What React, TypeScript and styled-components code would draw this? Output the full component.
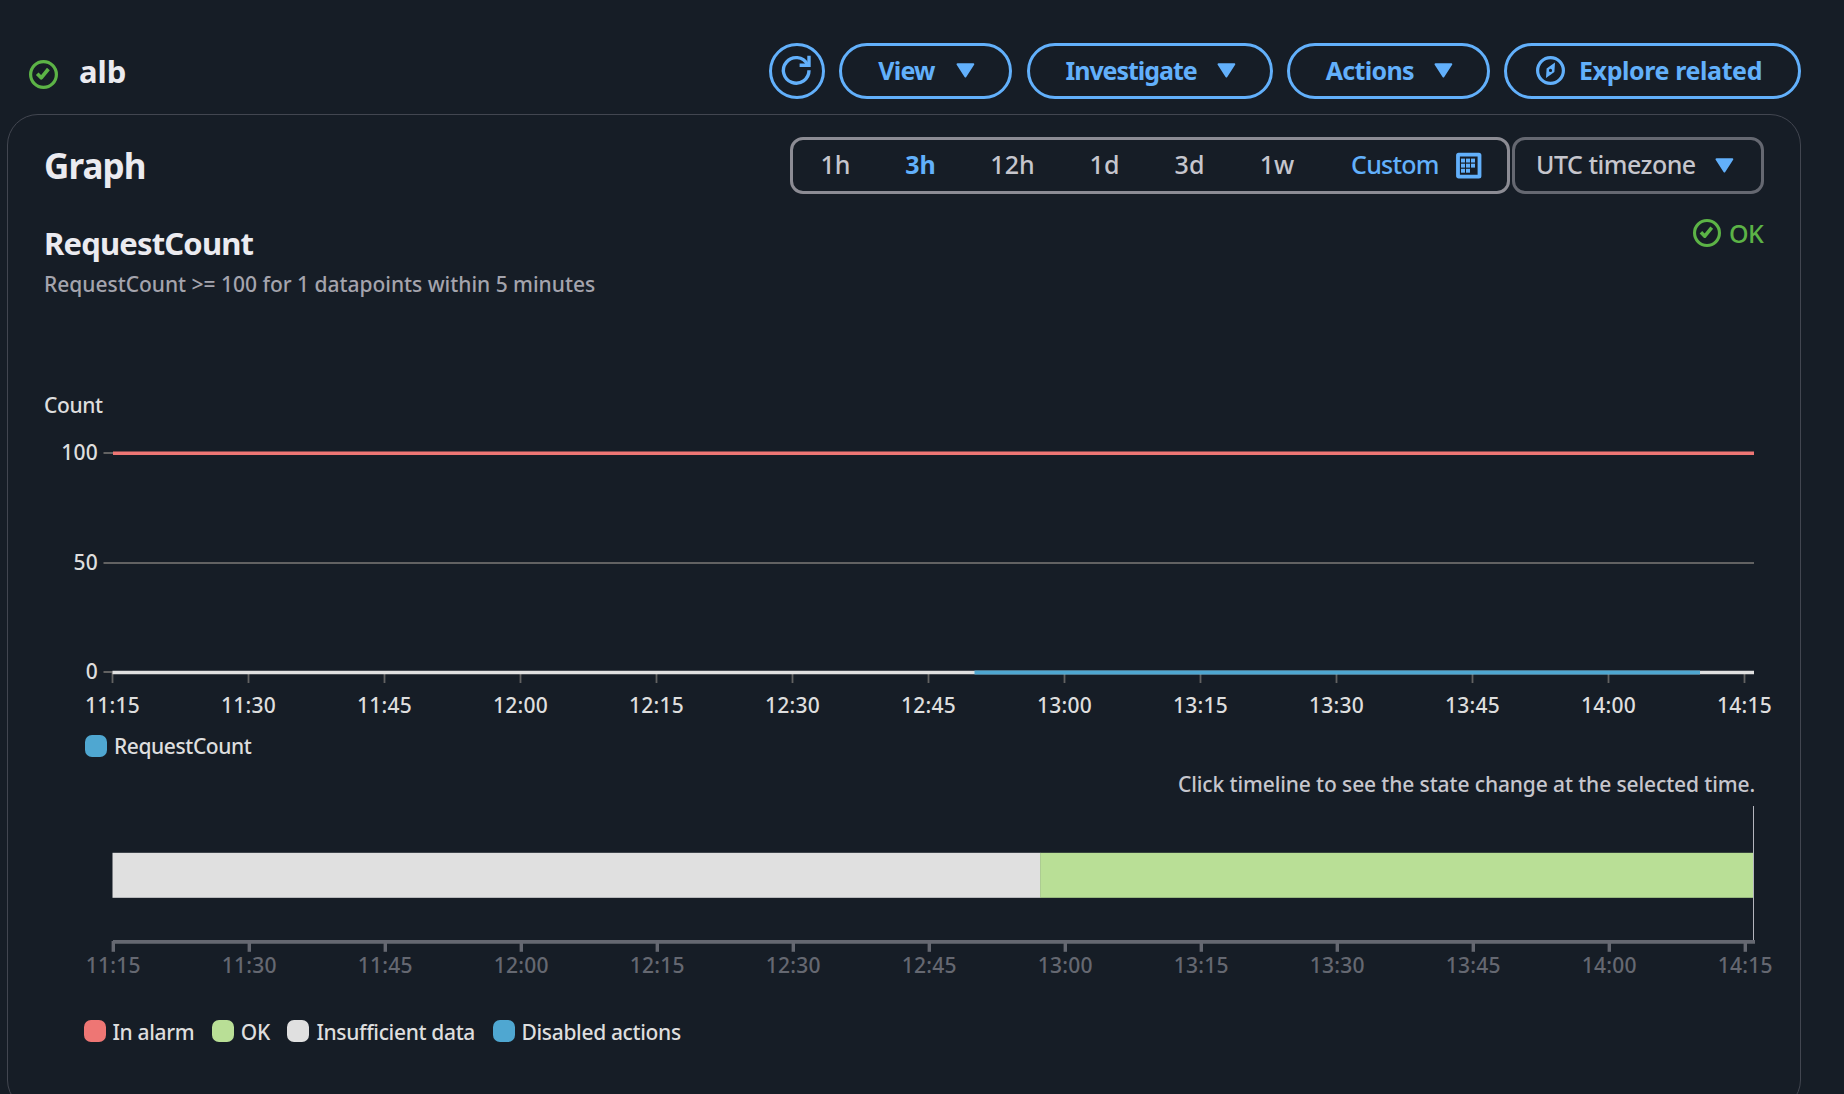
import React from "react";
import styled, { createGlobalStyle } from "styled-components";

const color = {
  page: "#161d26",
  border: "#424650",
  link: "#62b0fb",
  success: "#5cb346",
  heading: "#ebebf0",
  body: "#c6c6cd",
  muted: "#a4a4ad",
  dim: "#656871",
  control: "#8c8c94",
  chartText: "#dedede",
  grid: "#626262",
  alarm: "#ee7674",
  ok: "#b9df96",
  insufficient: "#e0e0e0",
  disabled: "#4fa7d1",
};

const font = `"Noto Sans", "Open Sans", sans-serif`;

const GlobalStyle = createGlobalStyle`
  *, *::before, *::after { box-sizing: border-box; }
  body {
    margin: 0;
    background: ${color.page};
    font-family: ${font};
    overflow: hidden;
  }
  button { font-family: inherit; background: none; cursor: pointer; margin: 0; }
  h1, h2, h3, p { margin: 0; }
  svg { display: block; flex: none; overflow: visible; }
`;

const Page = styled.main`
  height: 1094px;
  overflow: hidden;
`;

const PageHeader = styled.header`
  display: flex;
  justify-content: space-between;
  align-items: flex-start;
  height: 114px;
  padding: 43px 43px 0 29px;
`;

const TitleGroup = styled.div`
  display: flex;
  align-items: flex-start;
  gap: 21px;
  & > svg { margin-top: 17px; }
`;

const Title = styled.h1`
  margin-top: 8px;
  font-size: 31px;
  line-height: 40px;
  font-weight: 700;
  color: ${color.heading};
`;

const ButtonRow = styled.div`
  display: flex;
  gap: 14.25px;
`;

const PillButton = styled.button<{ $width: number; $spacing?: number }>`
  display: flex;
  align-items: center;
  justify-content: space-between;
  width: ${(p) => p.$width}px;
  height: 56px;
  padding: 0 34px 0 36px;
  border: 3px solid ${color.link};
  border-radius: 28px;
  color: ${color.link};
  font-size: 25px;
  line-height: 32px;
  font-weight: 700;
  letter-spacing: ${(p) => p.$spacing ?? 0}px;
  white-space: nowrap;
  & > svg { margin-bottom: 2px; }
`;

const RoundButton = styled(PillButton)`
  justify-content: center;
  padding: 0;
  & > svg { margin: 0; }
`;

const IconButton = styled(PillButton)`
  justify-content: flex-start;
  gap: 14px;
  padding: 0 0 0 29px;
  & > svg { margin-bottom: 1px; }
`;

const ButtonLabel = styled.span`
  padding-bottom: 2px;
`;

const Panel = styled.section`
  display: flex;
  flex-direction: column;
  width: 1794px;
  height: 997px;
  margin-left: 7px;
  padding: 22px 36px 0;
  border: 1px solid ${color.border};
  border-radius: 31px;
`;

const PanelHeader = styled.div`
  display: flex;
  justify-content: space-between;
  align-items: flex-start;
  height: 57px;
`;

const PanelTitle = styled.h2`
  margin-top: 7px;
  font-size: 35px;
  line-height: 44px;
  font-weight: 700;
  letter-spacing: -0.9px;
  color: ${color.heading};
`;

const Controls = styled.div`
  display: flex;
  gap: 2px;
`;

const ControlBox = styled.div<{ $width: number; $border: string }>`
  display: flex;
  align-items: center;
  width: ${(p) => p.$width}px;
  height: 57px;
  border: 3px solid ${(p) => p.$border};
  border-radius: 13px;
  font-size: 25px;
  line-height: 32px;
  font-weight: 500;
  color: ${color.body};
`;

const RangeOption = styled.button<{ $width: number; $active?: boolean }>`
  width: ${(p) => p.$width}px;
  padding: 0 0 3px;
  border: 0;
  text-align: center;
  font-size: 25px;
  line-height: 32px;
  font-weight: ${(p) => (p.$active ? 700 : 500)};
  color: ${(p) => (p.$active ? color.link : color.body)};
`;

const CustomRange = styled.button`
  display: flex;
  flex: 1;
  align-items: center;
  justify-content: space-between;
  padding: 0 25px 0 29px;
  border: 0;
  font-size: 25px;
  line-height: 32px;
  font-weight: 500;
  letter-spacing: -0.75px;
  color: ${color.link};
`;

const ControlLabel = styled.span`
  padding-bottom: 3px;
`;

const TimezoneSelect = styled(ControlBox)`
  justify-content: space-between;
  padding: 0 27px 0 21px;
  letter-spacing: -0.5px;
`;

const AlarmHeader = styled.div`
  display: flex;
  justify-content: space-between;
  align-items: flex-start;
  margin-top: 23px;
  height: 81px;
`;

const AlarmTitle = styled.h3`
  margin-top: 6px;
  font-size: 31px;
  line-height: 40px;
  font-weight: 700;
  letter-spacing: -0.83px;
  color: ${color.heading};
`;

const AlarmRule = styled.p`
  margin-top: 7px;
  font-size: 21px;
  line-height: 28px;
  font-weight: 500;
  letter-spacing: -0.02px;
  color: ${color.muted};
`;

const Status = styled.div`
  display: flex;
  align-items: flex-start;
  gap: 8px;
  padding-right: 1px;
  font-size: 25px;
  line-height: 32px;
  font-weight: 500;
  letter-spacing: -0.7px;
  color: ${color.success};
  & > svg { margin-top: 2px; }
`;

const AxisTitle = styled.p`
  margin-top: 93px;
  font-size: 21px;
  line-height: 28px;
  font-weight: 500;
  letter-spacing: -0.35px;
  color: ${color.chartText};
`;

const Plot = styled.svg`
  text {
    font-family: ${font};
    font-size: 21px;
    font-weight: 500;
    letter-spacing: 0.24px;
  }
`;

const TimelineHint = styled.p`
  margin-top: 10px;
  padding-right: 9px;
  text-align: right;
  font-size: 21px;
  line-height: 28px;
  font-weight: 500;
  letter-spacing: -0.12px;
  color: ${color.body};
`;

const Legend = styled.ul<{ $top: number; $left: number }>`
  display: flex;
  gap: 17.5px;
  margin: ${(p) => p.$top}px 0 0;
  padding: 0 0 0 ${(p) => p.$left}px;
  list-style: none;
`;

const LegendItem = styled.li<{ $spacing: number }>`
  display: flex;
  align-items: center;
  gap: 7px;
  font-size: 21px;
  line-height: 28px;
  font-weight: 500;
  letter-spacing: ${(p) => p.$spacing}px;
  color: ${color.chartText};
`;

const LegendLabel = styled.span<{ $drop?: number }>`
  padding-top: ${(p) => p.$drop ?? 0}px;
`;

const Swatch = styled.span<{ $color: string }>`
  width: 22px;
  height: 22px;
  border-radius: 7px;
  background: ${(p) => p.$color};
`;

const CheckCircle = ({ size = 29 }: { size?: number }) => (
  <svg width={size} height={size} viewBox="0 0 29 29" fill="none" stroke={color.success}>
    <circle cx="14.5" cy="14.5" r="12.9" strokeWidth="3.2" />
    <path d="M8.2 13.8L12.2 17.8L19.4 9" strokeWidth="3.7" strokeLinejoin="round" />
  </svg>
);

const Caret = () => (
  <svg width="19" height="15" viewBox="0 0 19 15">
    <path d="M1.5 1.3H17.3L9.4 13.4Z" fill={color.link} stroke={color.link} strokeWidth="2" strokeLinejoin="round" />
  </svg>
);

const RefreshIcon = () => (
  <svg width="30" height="30" viewBox="0 0 30 30" fill="none" stroke={color.link} strokeWidth="3.4">
    <path d="M27 14.3A12.8 12.8 0 1 1 25.4 8.2" />
    <path d="M27 -0.3V9.2H17.6" />
  </svg>
);

const CompassIcon = () => (
  <svg width="29" height="29" viewBox="0 0 29 29">
    <circle cx="14.5" cy="14.5" r="12.9" fill="none" stroke={color.link} strokeWidth="3.2" />
    <path
      d="M19 6.6L18.4 16L10 22L10.6 12.6ZM14.5 12.8A1.6 1.6 0 1 0 14.5 16A1.6 1.6 0 1 0 14.5 12.8Z"
      fill={color.link}
      fillRule="evenodd"
    />
  </svg>
);

const calendarCells = [
  [5, 5.6], [10, 5.6], [15, 5.6],
  [5, 10.7], [10, 10.7], [15, 10.7],
  [5, 15.8], [10, 15.8],
];

const CalendarIcon = () => (
  <svg width="26" height="26" viewBox="0 0 26 26">
    <rect x="2" y="1.7" width="21.5" height="22" rx="0.6" fill="none" stroke={color.link} strokeWidth="3.8" />
    {calendarCells.map(([x, y]) => (
      <rect key={`${x}-${y}`} x={x} y={y} width="4" height="3.9" fill={color.link} />
    ))}
  </svg>
);

const times = [
  "11:15", "11:30", "11:45", "12:00", "12:15", "12:30", "12:45",
  "13:00", "13:15", "13:30", "13:45", "14:00", "14:15",
];
const TICK_STEP = 136;
const PLOT_LEFT = 69;
const PLOT_RIGHT = 1710;

const yTicks = [
  { label: "100", y: 34 },
  { label: "50", y: 144 },
  { label: "0", y: 253 },
];

const MetricChart = () => (
  <Plot width="1720" height="301">
    {yTicks.map(({ label, y }) => (
      <g key={label}>
        <text x="54" y={y + 7.3} textAnchor="end" fill={color.chartText}>{label}</text>
        <line x1="59.5" x2={PLOT_RIGHT} y1={y} y2={y} stroke={color.grid} strokeWidth="2" />
      </g>
    ))}
    {times.map((t, i) => {
      const x = 68.5 + i * TICK_STEP;
      return (
        <g key={t}>
          <line x1={x} x2={x} y1="253" y2="264" stroke={color.grid} strokeWidth="1.8" />
          <text x={x} y="293.9" textAnchor="middle" fill={color.chartText}>{t}</text>
        </g>
      );
    })}
    <line x1={PLOT_LEFT} x2={PLOT_RIGHT} y1="34.2" y2="34.2" stroke={color.alarm} strokeWidth="3.4" />
    <line x1={PLOT_LEFT - 0.5} x2={PLOT_RIGHT} y1="253.5" y2="253.5" stroke={color.insufficient} strokeWidth="3.6" />
    <line x1="930.5" x2="1656" y1="253.5" y2="253.5" stroke={color.disabled} strokeWidth="4.2" />
  </Plot>
);

const StateTimeline = () => (
  <Plot width="1720" height="182">
    <rect x="68.5" y="54.8" width="928" height="45" fill={color.insufficient} />
    <rect x="996.2" y="54.8" width="713.8" height="45" fill={color.ok} />
    <line x1="1709.5" x2="1709.5" y1="8" y2="142" stroke="#b4b5bd" />
    <line x1="69" x2="1711" y1="143.9" y2="143.9" stroke={color.dim} strokeWidth="3.6" />
    {times.map((t, i) => {
      const x = 69.3 + i * TICK_STEP;
      return (
        <g key={t}>
          <line x1={x} x2={x} y1="143" y2="153.8" stroke={color.dim} strokeWidth="3.4" />
          <text x={x} y="175.3" textAnchor="middle" fill={color.dim}>{t}</text>
        </g>
      );
    })}
  </Plot>
);

const ranges = [
  { label: "1h", width: 85 },
  { label: "3h", width: 85, active: true },
  { label: "12h", width: 99 },
  { label: "1d", width: 85 },
  { label: "3d", width: 85 },
  { label: "1w", width: 90 },
];

const states = [
  { label: "In alarm", color: color.alarm },
  { label: "OK", color: color.ok },
  { label: "Insufficient data", color: color.insufficient },
  { label: "Disabled actions", color: color.disabled },
];

export default function App() {
  return (
    <>
      <GlobalStyle />
      <Page>
        <PageHeader>
          <TitleGroup>
            <CheckCircle />
            <Title>alb</Title>
          </TitleGroup>
          <ButtonRow>
            <RoundButton $width={56} aria-label="Refresh"><RefreshIcon /></RoundButton>
            <PillButton $width={173} $spacing={-0.8}><ButtonLabel>View</ButtonLabel><Caret /></PillButton>
            <PillButton $width={246} $spacing={-1.05}><ButtonLabel>Investigate</ButtonLabel><Caret /></PillButton>
            <PillButton $width={203} $spacing={-0.7}><ButtonLabel>Actions</ButtonLabel><Caret /></PillButton>
            <IconButton $width={297} $spacing={-0.4}><CompassIcon /><ButtonLabel>Explore related</ButtonLabel></IconButton>
          </ButtonRow>
        </PageHeader>
        <Panel>
          <PanelHeader>
            <PanelTitle>Graph</PanelTitle>
            <Controls>
              <ControlBox $width={720} $border={color.control}>
                {ranges.map((r) => (
                  <RangeOption key={r.label} $width={r.width} $active={r.active}>{r.label}</RangeOption>
                ))}
                <CustomRange><ControlLabel>Custom</ControlLabel><CalendarIcon /></CustomRange>
              </ControlBox>
              <TimezoneSelect $width={252} $border={color.dim}>
                <ControlLabel>UTC timezone</ControlLabel>
                <Caret />
              </TimezoneSelect>
            </Controls>
          </PanelHeader>
          <AlarmHeader>
            <div>
              <AlarmTitle>RequestCount</AlarmTitle>
              <AlarmRule>RequestCount &gt;= 100 for 1 datapoints within 5 minutes</AlarmRule>
            </div>
            <Status><CheckCircle size={28} />OK</Status>
          </AlarmHeader>
          <AxisTitle>Count</AxisTitle>
          <MetricChart />
          <Legend $top={12} $left={41}>
            <LegendItem $spacing={-0.42}><Swatch $color={color.disabled} /><LegendLabel>RequestCount</LegendLabel></LegendItem>
          </Legend>
          <TimelineHint>Click timeline to see the state change at the selected time.</TimelineHint>
          <StateTimeline />
          <Legend $top={36} $left={39.5}>
            {states.map((s) => (
              <LegendItem key={s.label} $spacing={-0.34}><Swatch $color={s.color} /><LegendLabel $drop={2}>{s.label}</LegendLabel></LegendItem>
            ))}
          </Legend>
        </Panel>
      </Page>
    </>
  );
}
